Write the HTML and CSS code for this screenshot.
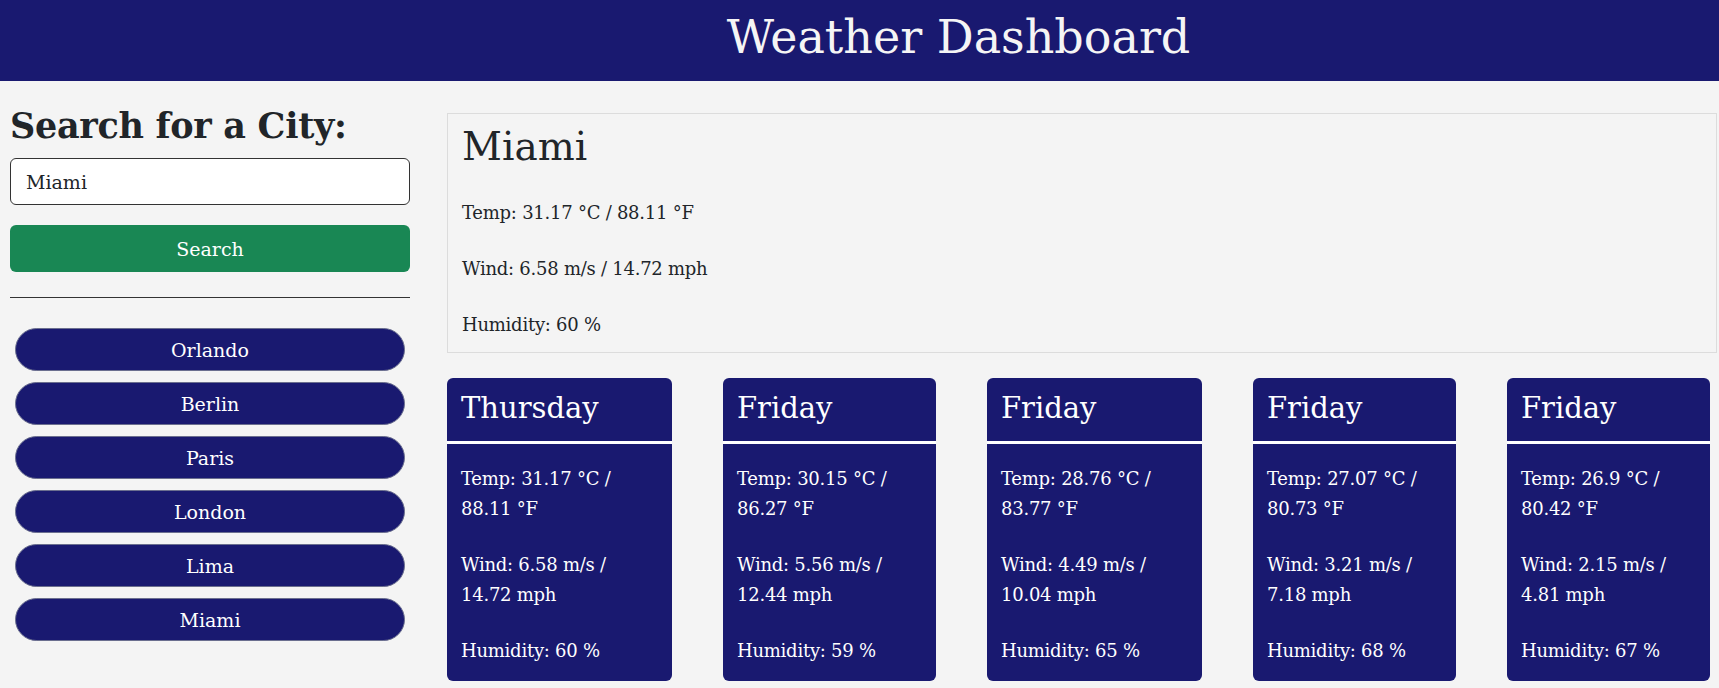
FILE: index.html
```html
<!DOCTYPE html>
<html lang="en">
<head>
<meta charset="utf-8">
<title>Weather Dashboard</title>
<link rel="stylesheet" href="styles.css">
</head>
<body>
<header class="top-bar">
  <h1 class="top-title">Weather Dashboard</h1>
</header>
<main class="layout">
  <aside class="sidebar">
    <h2 class="search-title">Search for a City:</h2>
    <input class="search-input" type="text" value="Miami">
    <button class="search-btn">Search</button>
    <hr class="divider">
    <div class="history">
      <button class="city-btn">Orlando</button>
      <button class="city-btn">Berlin</button>
      <button class="city-btn">Paris</button>
      <button class="city-btn">London</button>
      <button class="city-btn">Lima</button>
      <button class="city-btn">Miami</button>
    </div>
  </aside>
  <section class="content">
    <div class="current">
      <h2 class="current-city">Miami</h2>
      <p class="stat">Temp: 31.17 °C / 88.11 °F</p>
      <p class="stat">Wind: 6.58 m/s / 14.72 mph</p>
      <p class="stat">Humidity: 60 %</p>
    </div>
    <div class="forecast">
      <div class="card">
        <h3 class="card-day">Thursday</h3>
        <div class="card-body">
          <p class="stat">Temp: 31.17 °C / 88.11 °F</p>
          <p class="stat">Wind: 6.58 m/s / 14.72 mph</p>
          <p class="stat">Humidity: 60 %</p>
        </div>
      </div>
      <div class="card">
        <h3 class="card-day">Friday</h3>
        <div class="card-body">
          <p class="stat">Temp: 30.15 °C / 86.27 °F</p>
          <p class="stat">Wind: 5.56 m/s / 12.44 mph</p>
          <p class="stat">Humidity: 59 %</p>
        </div>
      </div>
      <div class="card">
        <h3 class="card-day">Friday</h3>
        <div class="card-body">
          <p class="stat">Temp: 28.76 °C / 83.77 °F</p>
          <p class="stat">Wind: 4.49 m/s / 10.04 mph</p>
          <p class="stat">Humidity: 65 %</p>
        </div>
      </div>
      <div class="card">
        <h3 class="card-day">Friday</h3>
        <div class="card-body">
          <p class="stat">Temp: 27.07 °C / 80.73 °F</p>
          <p class="stat">Wind: 3.21 m/s / 7.18 mph</p>
          <p class="stat">Humidity: 68 %</p>
        </div>
      </div>
      <div class="card">
        <h3 class="card-day">Friday</h3>
        <div class="card-body">
          <p class="stat">Temp: 26.9 °C / 80.42 °F</p>
          <p class="stat">Wind: 2.15 m/s / 4.81 mph</p>
          <p class="stat">Humidity: 67 %</p>
        </div>
      </div>
    </div>
  </section>
</main>
</body>
</html>
```
FILE: styles.css
```css
* { box-sizing: border-box; }

html, body {
  margin: 0;
  padding: 0;
}

body {
  background: #f4f4f4;
  color: #212529;
  font-family: "DejaVu Serif", "Liberation Serif", serif;
}

.top-bar {
  background: #191970;
  height: 81px;
  display: flex;
  align-items: center;
  justify-content: center;
  padding-left: 198px;
  padding-bottom: 8px;
}

.top-title {
  margin: 0;
  color: #f5f5f5;
  font-size: 46px;
  font-weight: 400;
  line-height: 1;
}

.layout {
  display: flex;
  align-items: flex-start;
  padding: 0 2px 0 10px;
}

.sidebar {
  width: 400px;
  flex: 0 0 400px;
  display: flex;
  flex-direction: column;
  padding-top: 25px;
}

.search-title {
  margin: 0 0 12px;
  font-size: 35px;
  font-weight: 700;
  line-height: 40px;
  letter-spacing: -0.3px;
}

.search-input {
  height: 47px;
  width: 100%;
  border: 1px solid #333;
  border-radius: 6px;
  background: #fff;
  padding: 0 15px;
  font-family: inherit;
  font-size: 19px;
  color: #212529;
}

.search-btn {
  margin-top: 20px;
  height: 47px;
  width: 100%;
  border: none;
  border-radius: 6px;
  background: #198754;
  color: #fff;
  font-family: inherit;
  font-size: 19px;
}

.divider {
  width: 100%;
  margin: 25px 0 30px;
  border: none;
  border-top: 1px solid #333;
}

.history {
  display: flex;
  flex-direction: column;
  gap: 11px;
  padding: 0 5px;
}

.city-btn {
  height: 43px;
  width: 100%;
  border: 1px solid #6b6f8f;
  border-radius: 22px;
  background: #191970;
  color: #fff;
  font-family: inherit;
  font-size: 19px;
}

.content {
  flex: 1;
  margin-left: 37px;
  padding-top: 32px;
  display: flex;
  flex-direction: column;
  gap: 25px;
}

.current {
  border: 1px solid #dcdcdc;
  padding: 10px 14px 4px;
  height: 240px;
}

.current-city {
  margin: 0 0 27px;
  font-size: 39px;
  font-weight: 400;
  line-height: 1.2;
}

.stat {
  margin: 0 0 26px;
  font-size: 18px;
  letter-spacing: -0.25px;
  line-height: 30px;
}

.forecast {
  display: grid;
  grid-template-columns: 225px 213px 215px 203px 203px;
  justify-content: space-between;
  padding-right: 7px;
}

.card {
  background: #191970;
  color: #fff;
  border-radius: 6px;
  height: 303px;
}

.card-day {
  margin: 0;
  font-size: 29px;
  font-weight: 400;
  line-height: 36px;
  padding: 12px 14px 15px;
  border-bottom: 3px solid #fff;
}

.card-body {
  padding: 20px 14px 0;
}

.card-body .stat:last-child {
  margin-bottom: 0;
}
```
